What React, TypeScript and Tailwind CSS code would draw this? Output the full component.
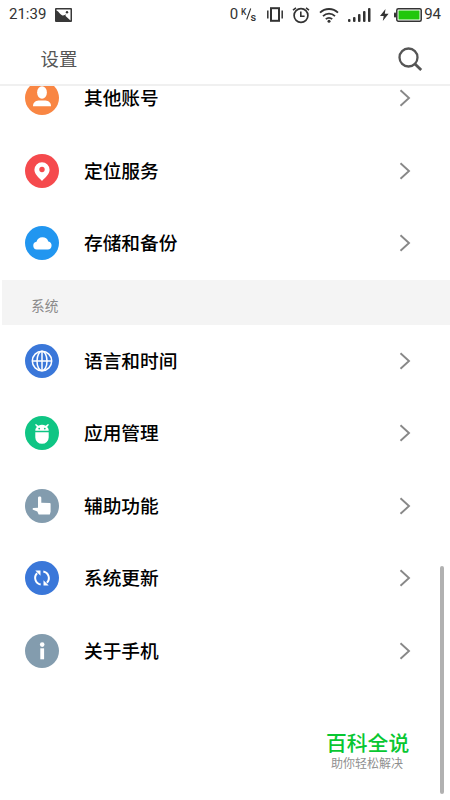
import type { ReactNode } from "react"

type Item = {
    label: string
    color: string
    icon: ReactNode
}

const accountItems: Item[] = [
    {
        label: "其他账号",
        color: "bg-[#f98643]",
        icon: (
            <>
                <ellipse cx="17" cy="11.5" rx="4.9" ry="6.2" fill="#fff" />
                <path d="M8 25.2c0-3.600 2.200-5.200 5.500-5.700h7c3.300.5 5.500 2.100 5.500 5.700z" fill="#fff" />
            </>
        ),
    },
    {
        label: "定位服务",
        color: "bg-[#f54a4d]",
        icon: (
            <>
                <path d="M17 27c-3.600-3.700-7.600-7-7.600-11.200a7.600 7.600 0 0 1 15.200 0C24.600 20 20.600 23.300 17 27z" fill="#fff" />
                <circle cx="17" cy="15.500" r="2.700" fill="#f54a4d" />
            </>
        ),
    },
    {
        label: "存储和备份",
        color: "bg-[#2196f0]",
        icon: (
            <path d="M11.800 23.600a4 4 0 0 1-.3-7.900 6.200 6.200 0 0 1 11.800-.2 4.100 4.100 0 0 1-.5 8.100z" fill="#fff" />
        ),
    },
]

const systemItems: Item[] = [
    {
        label: "语言和时间",
        color: "bg-[#3a77d9]",
        icon: (
            <g fill="none" stroke="#fff" strokeWidth="1.500">
                <circle cx="17" cy="17" r="9.700" />
                <ellipse cx="17" cy="17" rx="5" ry="9.700" />
                <path d="M7.300 17h19.400M17 7.300v19.400" />
            </g>
        ),
    },
    {
        label: "应用管理",
        color: "bg-[#0fc584]",
        icon: (
            <>
                <path d="M10.300 14.800c0-1.800.6-2.900 1.600-3.800l-1.900-2.200 1-.9 2.300 1.800a8 8 0 0 1 7.400 0L23 7.900l1 .9-1.900 2.200c1 .9 1.600 2 1.600 3.800z" fill="#fff" />
                <path d="M10.300 16.200h13.400v5.300a6.700 6.300 0 0 1-13.400 0z" fill="#fff" />
                <circle cx="14.200" cy="12.600" r=".9" fill="#0fc584" />
                <circle cx="19.800" cy="12.600" r=".9" fill="#0fc584" />
            </>
        ),
    },
    {
        label: "辅助功能",
        color: "bg-[#839cae]",
        icon: (
            <path d="M13 8.700c0-1.600 3.300-1.600 3.300 0v5l8.500.2c.5 0 .8.300.8.800v8l-.8 2.700H13.700l-1.400-2.800-4.300-1.800c-.6-.5-.5-1.700.4-1.800l4.600-.2z" fill="#fff" />
        ),
    },
    {
        label: "系统更新",
        color: "bg-[#3a77d9]",
        icon: (
            <>
                <path d="M12.100 12.300a6.700 6.700 0 0 0 3.600 11.300M21.900 21.700a6.700 6.700 0 0 0-3.600-11.300" fill="none" stroke="#fff" strokeWidth="2" />
                <path d="M10.300 9.500h5.200v5.200zM23.700 24.500h-5.200v-5.200z" fill="#fff" />
            </>
        ),
    },
    {
        label: "关于手机",
        color: "bg-[#839cae]",
        icon: (
            <>
                <circle cx="17.200" cy="10.600" r="2.300" fill="#fff" />
                <path d="M15.300 14.300h3.800v11h-3.800z" fill="#fff" />
            </>
        ),
    },
]

function StatusBar() {
    return (
        <div className="flex h-7 shrink-0 items-center pl-[9px] pr-[9px] pt-px font-[Roboto,sans-serif] text-[15px] text-[#333]">
            <span className="w-[46px]">21:39</span>
            <svg width="17" height="14" viewBox="0 0 17 14">
                <rect width="17" height="14" rx="1" fill="#383838" />
                <path d="M1.500 1.500h14v11L10.800 8.300c-.6-.8-.1-1.700.5-2.300-1.300.5-2.300 2-4.300 1.300C4.900 6.500 4 3.500 1.500 2.600z" fill="#fff" />
                <circle cx="12" cy="4.300" r="1.200" fill="#383838" />
            </svg>

            <span className="ml-auto">0</span>
            <svg className="ml-[3px]" width="17" height="17" viewBox="0 0 17 17" fontFamily="Roboto, sans-serif" fill="#333">
                <text x="0" y="8.500" fontSize="8.500" fontWeight="500">K</text>
                <path d="M9.700 2.500 5.700 13.500" stroke="#333" strokeWidth="1.100" />
                <text x="9.500" y="14.500" fontSize="11" fontWeight="500">s</text>
            </svg>
            <svg className="ml-[9px]" width="16" height="15" viewBox="0 0 16 15" fill="none" stroke="#333">
                <rect x="4" y="1.200" width="8" height="12.600" strokeWidth="2" />
                <path d="M.8 3.500v8M15.200 3.500v8" strokeWidth="1.500" />
            </svg>
            <svg className="ml-[9px]" width="18" height="18" viewBox="0 0 18 18" fill="none" stroke="#333">
                <circle cx="9" cy="9.500" r="6.900" strokeWidth="1.700" />
                <path d="M8.800 5.500v4.700h3.800" strokeWidth="1.600" />
                <path d="M1 4.200 4 1.800M17 4.200l-3-2.400" strokeWidth="1.500" />
            </svg>
            <svg className="ml-[9px]" width="20" height="16" viewBox="0 0 20 16" fill="none" stroke="#333" strokeWidth="1.800">
                <path d="M1 5.600a13 13 0 0 1 18 0M4 9.100a8.700 8.700 0 0 1 12 0M6.800 12.200a4.700 4.700 0 0 1 6.400 0" />
                <circle cx="10" cy="14.200" r="1.500" fill="#333" stroke="none" />
            </svg>
            <svg className="ml-[9px]" width="23" height="14" viewBox="0 0 23 14" fill="#333">
                <rect x="0" y="11" width="2.500" height="3" rx="1" />
                <rect x="5" y="9" width="2.500" height="5" rx="1" />
                <rect x="10" y="6" width="2.500" height="8" rx="1" />
                <rect x="15" y="3" width="2.500" height="11" rx="1" />
                <rect x="20" y="0" width="2.500" height="14" rx="1" />
            </svg>
            <svg className="ml-[9px]" width="9" height="12" viewBox="0 0 9 12" fill="#333">
                <path d="M5.500 0 0 7h3.700L2.800 12 8.600 4.800H4.800z" />
            </svg>
            <svg className="ml-[5px]" width="28" height="14" viewBox="0 0 28 14">
                <rect x="2.800" y=".8" width="24.400" height="12.400" rx="1.500" fill="#fff" stroke="#333" strokeWidth="1.500" />
                <rect x="4.500" y="2.500" width="21" height="9" fill="#20c70c" />
                <rect x="0" y="4.500" width="2" height="5" rx=".8" fill="#333" />
            </svg>
            <span className="ml-[2px]">94</span>
        </div>
    )
}

function Row({ item }: { item: Item }) {
    return (
        <div className="flex h-[72.5px] items-center pl-[25px] pr-[39px]">
            <div className={`size-[34px] shrink-0 rounded-full ${item.color}`}>
                <svg width="34" height="34" viewBox="0 0 34 34">{item.icon}</svg>
            </div>
            <span className="ml-[25px] flex-1 pb-[2px] text-[18.7px] font-medium leading-[22px] text-black">{item.label}</span>
            <svg width="12" height="18" viewBox="0 0 12 18" fill="none" stroke="#888" strokeWidth="1.900">
                <path d="M1.500 1.200 10 9l-8.500 7.800" />
            </svg>
        </div>
    )
}

export default function App() {
    return (
        <div className="relative flex h-[800px] w-[450px] flex-col overflow-hidden bg-white font-['Noto_Sans_CJK_SC',sans-serif]">
            <StatusBar />

            <header className="flex h-[58px] shrink-0 items-center justify-between border-b-2 border-[#f0f0f0] pl-[40.5px] pr-[27px]">
                <h1 className="pt-[4px] text-[18.4px] leading-7 text-[#555]">设置</h1>
                <svg className="mt-[5px]" width="26" height="26" viewBox="0 0 26 26" fill="none" stroke="#555">
                    <circle cx="11.500" cy="11.500" r="9" strokeWidth="2.300" />
                    <path d="m18 18 6.200 6" strokeWidth="2.800" />
                </svg>
            </header>

            <main className="flex-1 overflow-hidden">
                <div className="-mt-[24px]">
                    {accountItems.map((item) => (
                        <Row key={item.label} item={item} />
                    ))}
                    <div className="ml-[2px] flex h-[45px] items-center bg-[#f4f4f4] pl-[29px] pt-[6px] text-[13.7px] text-[#8a8a8a]">
                        系统
                    </div>
                    {systemItems.map((item) => (
                        <Row key={item.label} item={item} />
                    ))}
                </div>
            </main>

            <div className="absolute left-[326px] top-[727px] w-[84px]">
                <p className="whitespace-nowrap text-[20.8px] font-medium leading-[30px] text-[#08c732]">百科全说</p>
                <p className="-mt-[2px] whitespace-nowrap pl-[5px] text-[12px] leading-4 text-[#8f8f8f]">助你轻松解决</p>
            </div>
            <div className="absolute right-[6px] top-[566px] h-[228px] w-[4px] rounded-full bg-[#b1b1b1]" />
        </div>
    )
}
